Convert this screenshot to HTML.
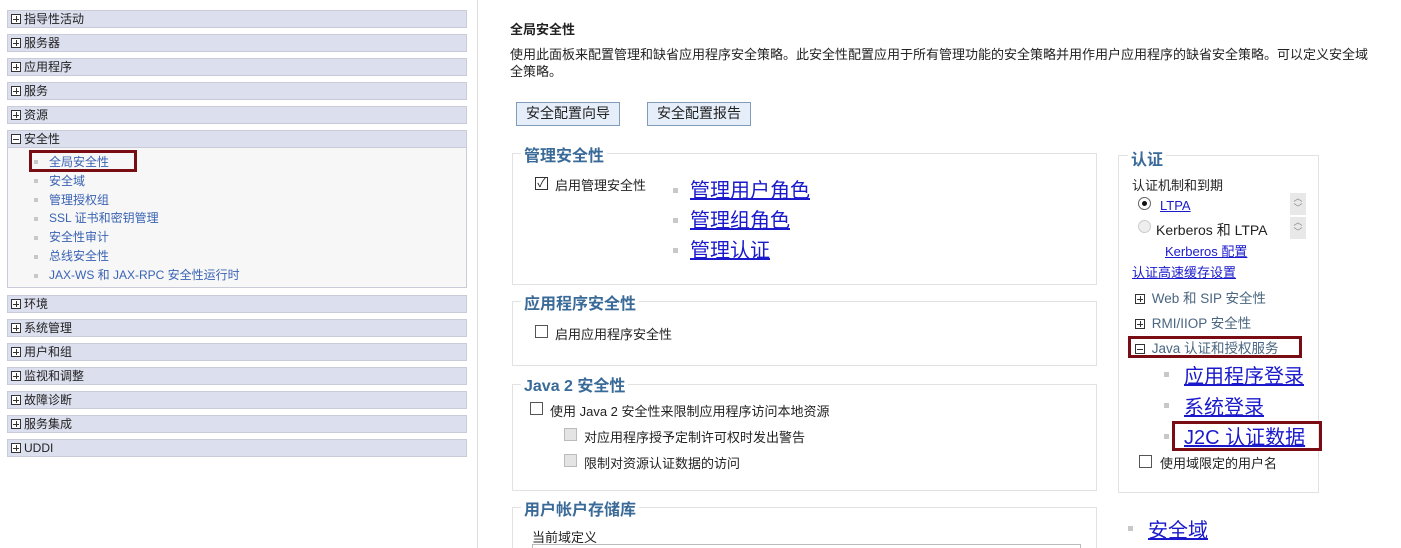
<!DOCTYPE html>
<html><head><meta charset="utf-8"><style>
*{margin:0;padding:0;box-sizing:border-box}
html,body{width:1401px;height:548px;overflow:hidden}
body{background:#fff;font-family:"Liberation Sans","Noto Sans CJK SC",sans-serif;font-size:12px;color:#222;position:relative}
.a{position:absolute;white-space:nowrap}
.row{position:absolute;left:7px;width:460px;height:18px;background:#dcdfee;border:1px solid #c9ccd8;font-size:12px;line-height:16px;padding-left:3px}
.pb{display:inline-block;width:10px;height:10px;border:1px solid #333;position:relative;vertical-align:-1px;margin-right:3px;background:#fff}
.pb:before{content:"";position:absolute;left:1px;right:1px;top:3.5px;height:1px;background:#333}
.pb.p:after{content:"";position:absolute;top:1px;bottom:1px;left:3.5px;width:1px;background:#333}
.nav{position:absolute;left:49px;color:#3a63b4;font-size:12px}
.bul{position:absolute;width:4px;height:4px;background:#c8c8c8}
.fs{position:absolute;border:1px solid #e2e2e2}
.lg{position:absolute;background:#fff;color:#3a6a98;font-weight:bold;font-size:16px;padding:0 3px;white-space:nowrap}
.big{position:absolute;color:#1a1acc;text-decoration:underline;font-size:20px;white-space:nowrap}
.cb{position:absolute;width:13px;height:13px;border:1px solid #555;background:#fff}
.cbd{position:absolute;width:13px;height:13px;border:1px solid #bbb;background:#e4e4e4}
.btn{position:absolute;height:24px;background:#e6eefa;border:1px solid #7f9db9;font-size:14px;line-height:21px;padding:0 9px;color:#222}
.lk{color:#1a1acc;text-decoration:underline}
</style></head><body>
<div class="a" style="left:477px;top:0;width:1px;height:548px;background:#ddd"></div>

<div class="row" style="top:10px"><span class="pb p"></span>指导性活动</div>
<div class="row" style="top:34px"><span class="pb p"></span>服务器</div>
<div class="row" style="top:58px"><span class="pb p"></span>应用程序</div>
<div class="row" style="top:82px"><span class="pb p"></span>服务</div>
<div class="row" style="top:106px"><span class="pb p"></span>资源</div>
<div class="a" style="left:7px;top:130px;width:460px;height:158px;background:#f7f7f7;border:1px solid #c9ccd8"></div>
<div class="row" style="top:130px"><span class="pb"></span>安全性</div>
<div class="bul" style="left:34px;top:160px"></div><div class="nav" style="top:153px">全局安全性</div>
<div class="a" style="left:29px;top:150px;width:108px;height:22px;border:3px solid #7a0d14"></div>
<div class="bul" style="left:34px;top:179px"></div><div class="nav" style="top:172px">安全域</div>
<div class="bul" style="left:34px;top:198px"></div><div class="nav" style="top:191px">管理授权组</div>
<div class="bul" style="left:34px;top:217px"></div><div class="nav" style="top:209px">SSL 证书和密钥管理</div>
<div class="bul" style="left:34px;top:236px"></div><div class="nav" style="top:228px">安全性审计</div>
<div class="bul" style="left:34px;top:255px"></div><div class="nav" style="top:247px">总线安全性</div>
<div class="bul" style="left:34px;top:274px"></div><div class="nav" style="top:266px">JAX-WS 和 JAX-RPC 安全性运行时</div>
<div class="row" style="top:295px"><span class="pb p"></span>环境</div>
<div class="row" style="top:319px"><span class="pb p"></span>系统管理</div>
<div class="row" style="top:343px"><span class="pb p"></span>用户和组</div>
<div class="row" style="top:367px"><span class="pb p"></span>监视和调整</div>
<div class="row" style="top:391px"><span class="pb p"></span>故障诊断</div>
<div class="row" style="top:415px"><span class="pb p"></span>服务集成</div>
<div class="row" style="top:439px"><span class="pb p"></span>UDDI</div>

<div class="a" style="left:510px;top:19px;font-weight:bold;font-size:13px">全局安全性</div>
<div class="a" style="left:510px;top:44px;font-size:13px">使用此面板来配置管理和缺省应用程序安全策略。此安全性配置应用于所有管理功能的安全策略并用作用户应用程序的缺省安全策略。可以定义安全域</div>
<div class="a" style="left:510px;top:61px;font-size:13px">全策略。</div>
<div class="btn" style="left:516px;top:102px">安全配置向导</div>
<div class="btn" style="left:647px;top:102px">安全配置报告</div>

<div class="fs" style="left:512px;top:153px;width:585px;height:132px"></div>
<div class="lg" style="left:521px;top:142px">管理安全性</div>
<div class="cb" style="left:535px;top:177px;border-color:#333;font-size:12px;line-height:10px;text-align:center">✓</div>
<div class="a" style="left:555px;top:175px;font-size:13px">启用管理安全性</div>
<div class="bul" style="left:673px;top:188px;width:5px;height:5px"></div><div class="big" style="left:690px;top:174px">管理用户角色</div>
<div class="bul" style="left:673px;top:218px;width:5px;height:5px"></div><div class="big" style="left:690px;top:204px">管理组角色</div>
<div class="bul" style="left:673px;top:248px;width:5px;height:5px"></div><div class="big" style="left:690px;top:234px">管理认证</div>

<div class="fs" style="left:512px;top:301px;width:585px;height:65px"></div>
<div class="lg" style="left:521px;top:290px">应用程序安全性</div>
<div class="cb" style="left:535px;top:325px"></div>
<div class="a" style="left:555px;top:324px;font-size:13px">启用应用程序安全性</div>

<div class="fs" style="left:512px;top:384px;width:585px;height:107px"></div>
<div class="lg" style="left:521px;top:372px">Java 2 安全性</div>
<div class="cb" style="left:530px;top:402px"></div>
<div class="a" style="left:550px;top:401px;font-size:13px">使用 Java 2 安全性来限制应用程序访问本地资源</div>
<div class="cbd" style="left:564px;top:428px"></div>
<div class="a" style="left:584px;top:427px;font-size:13px">对应用程序授予定制许可权时发出警告</div>
<div class="cbd" style="left:564px;top:454px"></div>
<div class="a" style="left:584px;top:453px;font-size:13px">限制对资源认证数据的访问</div>

<div class="fs" style="left:512px;top:507px;width:585px;height:60px"></div>
<div class="lg" style="left:521px;top:496px">用户帐户存储库</div>
<div class="a" style="left:532px;top:527px;font-size:13px">当前域定义</div>
<div class="a" style="left:532px;top:544px;width:549px;height:10px;border:1px solid #bbb"></div>

<div class="fs" style="left:1118px;top:155px;width:201px;height:338px"></div>
<div class="lg" style="left:1128px;top:146px">认证</div>
<div class="a" style="left:1132px;top:175px;font-size:13px">认证机制和到期</div>
<div class="a" style="left:1138px;top:197px;width:13px;height:13px;border-radius:50%;border:1px solid #666;background:#fff"><div style="position:absolute;left:3px;top:3px;width:5px;height:5px;border-radius:50%;background:#111"></div></div>
<div class="a lk" style="left:1160px;top:198px;font-size:13px">LTPA</div>
<div class="a" style="left:1138px;top:220px;width:13px;height:13px;border-radius:50%;border:1px solid #ccc;background:#eee"></div>
<div class="a" style="left:1156px;top:220px;font-size:14px">Kerberos 和 LTPA</div>
<div class="a" style="left:1290px;top:193px;width:16px;height:22px;background:#e8e8e8;color:#888;font-size:9px;line-height:10px;text-align:center">︿<br>﹀</div>
<div class="a" style="left:1290px;top:217px;width:16px;height:22px;background:#e8e8e8;color:#888;font-size:9px;line-height:10px;text-align:center">︿<br>﹀</div>
<div class="a lk" style="left:1165px;top:241px;font-size:13px">Kerberos 配置</div>
<div class="a lk" style="left:1132px;top:262px;font-size:13px">认证高速缓存设置</div>
<div class="a" style="left:1135px;top:287px;font-size:13.5px;color:#4a6680"><span class="pb p"></span> Web 和 SIP 安全性</div>
<div class="a" style="left:1135px;top:312px;font-size:13.5px;color:#4a6680"><span class="pb p"></span> RMI/IIOP 安全性</div>
<div class="a" style="left:1135px;top:337px;font-size:13.5px;color:#4a6680"><span class="pb"></span> Java 认证和授权服务</div>
<div class="a" style="left:1128px;top:336px;width:174px;height:22px;border:3px solid #7a0d14"></div>
<div class="bul" style="left:1164px;top:372px;width:5px;height:5px"></div><div class="big" style="left:1184px;top:360px">应用程序登录</div>
<div class="bul" style="left:1164px;top:403px;width:5px;height:5px"></div><div class="big" style="left:1184px;top:391px">系统登录</div>
<div class="bul" style="left:1164px;top:434px;width:5px;height:5px"></div><div class="big" style="left:1184px;top:421px">J2C 认证数据</div>
<div class="a" style="left:1172px;top:421px;width:150px;height:30px;border:3px solid #7a0d14"></div>
<div class="cb" style="left:1139px;top:455px"></div>
<div class="a" style="left:1160px;top:453px;font-size:13px">使用域限定的用户名</div>
<div class="bul" style="left:1128px;top:526px;width:5px;height:5px"></div><div class="big" style="left:1148px;top:514px">安全域</div>
</body></html>
